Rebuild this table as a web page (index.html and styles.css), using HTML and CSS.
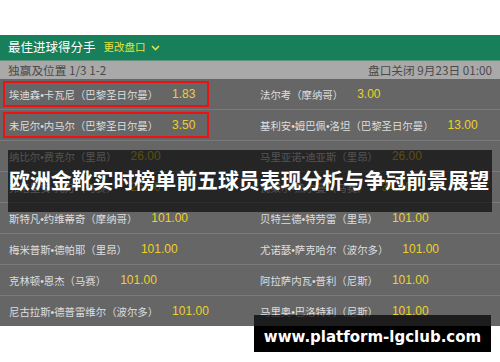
FILE: index.html
```html
<!DOCTYPE html>
<html lang="zh-CN">
<head>
<meta charset="utf-8">
<title>最佳进球得分手</title>
<link rel="stylesheet" href="styles.css">
</head>
<body>
<div class="page">
  <div class="board">
    <div class="header">
      <span class="header-title">最佳进球得分手</span>
      <span class="header-link">更改盘口
        <svg class="chev" width="9" height="6" viewBox="0 0 9 6"><path d="M1 1 L4.5 4.5 L8 1" fill="none" stroke="currentColor" stroke-width="1.6"/></svg>
      </span>
    </div>
    <div class="subheader">
      <span>独赢及位置 1/3 1-2</span>
      <span>盘口关闭 9月23日 01:00</span>
    </div>
    <div class="rows">
      <div class="cell left"><span class="hl"><span class="name">埃迪森•卡瓦尼（巴黎圣日尔曼）</span><span class="odds">1.83</span></span></div>
      <div class="cell right"><span class="name">法尔考（摩纳哥）</span><span class="odds">3.00</span></div>

      <div class="cell left"><span class="hl"><span class="name">未尼尔•内马尔（巴黎圣日尔曼）</span><span class="odds">3.50</span></span></div>
      <div class="cell right"><span class="name">基利安•姆巴佩•洛坦（巴黎圣日尔曼）</span><span class="odds">13.00</span></div>

      <div class="cell left"><span class="name">纳比尔•费克尔（里昂）</span><span class="odds">26.00</span></div>
      <div class="cell right"><span class="name">马里亚诺•迪亚斯（里昂）</span><span class="odds">26.00</span></div>

      <div class="cell left"><span class="name">弗洛里安•托万（马赛）</span><span class="odds">26.00</span></div>
      <div class="cell right"><span class="name">瓦莱尔•热尔曼（马赛）</span><span class="odds">34.00</span></div>

      <div class="cell left"><span class="name">斯特凡•约维蒂奇（摩纳哥）</span><span class="odds">101.00</span></div>
      <div class="cell right"><span class="name">贝特兰德•特劳雷（里昂）</span><span class="odds">101.00</span></div>

      <div class="cell left"><span class="name">梅米普斯•德帕耶（里昂）</span><span class="odds">101.00</span></div>
      <div class="cell right"><span class="name">尤诺瑟•萨克哈尔（波尔多）</span><span class="odds">101.00</span></div>

      <div class="cell left"><span class="name">克林顿•恩杰（马赛）</span><span class="odds">101.00</span></div>
      <div class="cell right"><span class="name">阿拉萨内瓦•普利（尼斯）</span><span class="odds">101.00</span></div>

      <div class="cell left last"><span class="name">尼古拉斯•德普雷维尔（波尔多）</span><span class="odds">101.00</span></div>
      <div class="cell right last"><span class="name">马里奥•巴洛特利（尼斯）</span><span class="odds">101.00</span></div>
    </div>
  </div>
  <div class="title-overlay">欧洲金靴实时榜单前五球员表现分析与争冠前景展望</div>
  <div class="url-overlay">www.platform-lgclub.com</div>
</div>
</body>
</html>
```

FILE: styles.css
```css
html, body {
  margin: 0;
  padding: 0;
  background: #ffffff;
}

body {
  font-family: "Noto Sans CJK SC", "Noto Sans", sans-serif;
}

.page {
  position: relative;
  width: 500px;
  height: 362px;
  overflow: hidden;
  padding-top: 35px;
  box-sizing: border-box;
}

.board {
  width: 500px;
}

.header {
  height: 26px;
  background: #17805a;
  display: flex;
  align-items: center;
  padding: 0 8px;
  gap: 8px;
  border-bottom: 1px solid #5f8f7c;
  box-sizing: border-box;
}

.header-title {
  color: #ffffff;
  font-size: 12.5px;
  line-height: 1;
}

.header-link {
  color: #e3e23a;
  font-size: 10.5px;
  line-height: 1;
  display: flex;
  align-items: center;
  gap: 5px;
}

.chev {
  display: block;
}

.subheader {
  height: 18px;
  background: #a9a9a9;
  display: flex;
  align-items: center;
  justify-content: space-between;
  padding: 0 8px;
  color: #4a4a4a;
  font-size: 11.7px;
  line-height: 1;
}

.rows {
  display: grid;
  grid-template-columns: 250px 250px;
  background: #666666;
}

.cell {
  height: 31px;
  box-sizing: border-box;
  border-bottom: 1px solid #7a7a7a;
  display: flex;
  align-items: center;
  color: #dedede;
  font-size: 10.4px;
  white-space: nowrap;
}

.name {
  font-family: "Liberation Sans", "Noto Sans CJK SC", sans-serif;
}

.cell.last {
  border-bottom: none;
  height: 30px;
}

.cell.left {
  padding-left: 9px;
}

.cell.right {
  padding-left: 10px;
}

.hl {
  display: flex;
  align-items: center;
  margin-left: -6px;
  width: 206px;
  height: 26px;
  box-sizing: border-box;
  border: 2px solid #ee1111;
  padding-left: 4px;
}

.odds {
  font-family: "Liberation Sans", "Noto Sans", sans-serif;
  font-size: 12px;
  color: #ecd12a;
  margin-left: 14px;
}

.title-overlay {
  position: absolute;
  left: 8px;
  top: 150px;
  width: 484px;
  height: 62px;
  background: rgba(0, 0, 0, 0.63);
  color: #ffffff;
  font-size: 20.9px;
  font-weight: 700;
  line-height: 1;
  display: flex;
  align-items: center;
  padding-left: 1px;
  padding-bottom: 4px;
  box-sizing: border-box;
  white-space: nowrap;
}

.url-overlay {
  position: absolute;
  left: 254px;
  top: 315px;
  width: 237px;
  height: 37px;
  background: linear-gradient(to bottom, rgba(0, 0, 0, 0.72) 0, rgba(0, 0, 0, 0.72) 11px, #000000 11px);
  color: #ffffff;
  font-family: "DejaVu Sans", sans-serif;
  font-weight: 700;
  font-size: 15px;
  display: flex;
  align-items: center;
  justify-content: center;
  padding-top: 6px;
  box-sizing: border-box;
  white-space: nowrap;
}
```
